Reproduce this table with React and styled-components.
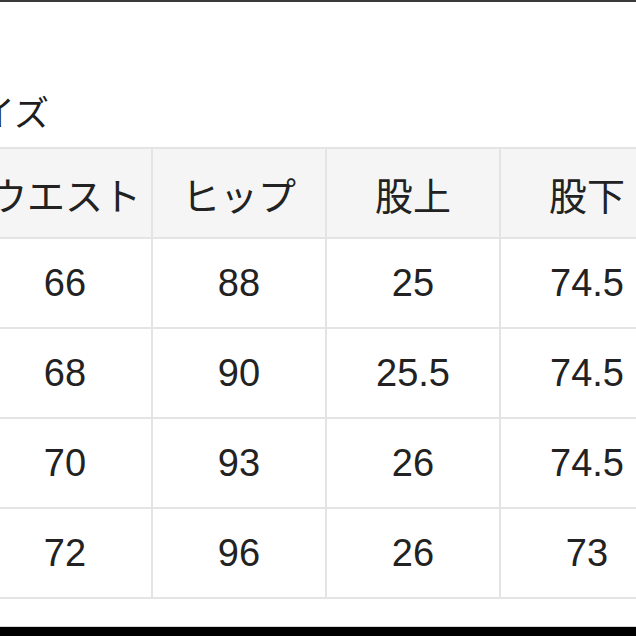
import React from "react";
import styled, { createGlobalStyle } from "styled-components";

const Global = createGlobalStyle`
  html, body { margin: 0; padding: 0; background: #ffffff; }
  body {
    width: 636px;
    height: 636px;
    overflow: hidden;
    font-family: "Liberation Sans", "Noto Sans CJK JP", sans-serif;
    color: #222222;
  }
`;

const Page = styled.div`
  width: 636px;
  height: 636px;
  display: flex;
  flex-direction: column;
  overflow: hidden;
`;

const TopBar = styled.div`
  height: 2px;
  background: #3a3a3a;
  flex: none;
`;

const Title = styled.h2`
  margin: 92px 0 0 -55px;
  font-size: 35px;
  line-height: 40px;
  font-weight: 400;
  white-space: nowrap;
  color: #1e1e1e;
`;

const SizeTable = styled.table`
  margin: 13px 0 0 -23px;
  border-collapse: collapse;
  table-layout: fixed;
  width: 696px;
  flex: none;
`;

const Cell = styled.td`
  width: 172px;
  height: 88px;
  padding: 0;
  border: 2px solid #e4e4e4;
  text-align: center;
  vertical-align: middle;
  font-size: 38px;
  font-weight: 400;
  background: ${(p) => (p.$head ? "#f5f5f5" : "#ffffff")};
  color: #222222;
  white-space: nowrap;
`;

const Spacer = styled.div`
  flex: 1;
`;

const BottomLine = styled.div`
  height: 1px;
  background: #d6d6d6;
  flex: none;
`;

const BottomBar = styled.div`
  height: 9px;
  background: #000000;
  flex: none;
`;

const headers = ["ウエスト", "ヒップ", "股上", "股下"];
const rows = [
  ["66", "88", "25", "74.5"],
  ["68", "90", "25.5", "74.5"],
  ["70", "93", "26", "74.5"],
  ["72", "96", "26", "73"],
];

export default function App() {
  return (
    <>
      <Global />
      <Page>
        <TopBar />
        <Title>サイズ</Title>
        <SizeTable>
          <thead>
            <tr>
              {headers.map((h) => (
                <Cell as="th" $head key={h}>
                  {h}
                </Cell>
              ))}
            </tr>
          </thead>
          <tbody>
            {rows.map((r, i) => (
              <tr key={i}>
                {r.map((v, j) => (
                  <Cell key={j}>{v}</Cell>
                ))}
              </tr>
            ))}
          </tbody>
        </SizeTable>
        <Spacer />
        <BottomLine />
        <BottomBar />
      </Page>
    </>
  );
}
